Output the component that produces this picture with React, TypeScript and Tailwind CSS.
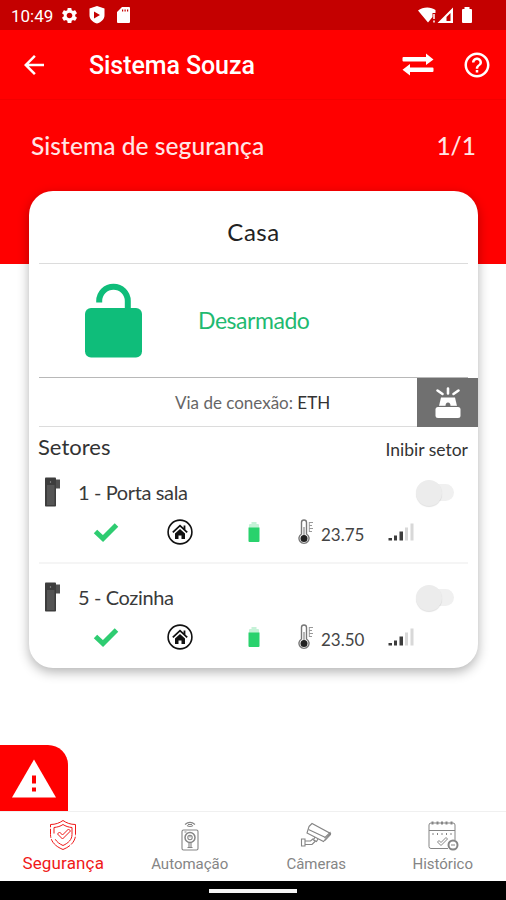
import type { ReactNode } from 'react';
import { MdArrowBack, MdHelpOutline, MdSettings } from 'react-icons/md';

type Sector = {
  id: number;
  name: string;
  temperature: string;
};

const sectors: Sector[] = [
  { id: 1, name: 'Porta sala', temperature: '23.75' },
  { id: 5, name: 'Cozinha', temperature: '23.50' },
];

function StatusBar() {
  return (
    <div className="flex h-[30px] shrink-0 items-center bg-[#c40000] pl-[11px] text-white">
      <span className="w-[49px] pt-[2px] font-['Roboto'] text-[17px] leading-[28px] whitespace-nowrap">10:49</span>
      <MdSettings className="size-[19px]" />
      <svg className="ml-[10px] h-[18px] w-[16px]" viewBox="0 0 16 18" fill="currentColor">
        <path fillRule="evenodd" d="M8 0l7.5 2.6v6.6c0 3.8-3 6.8-7.5 8.4C3.500 16 .5 13 .5 9.200V2.600zM5 5.500v7l6-3.500z" />
      </svg>
      <svg className="ml-[12px] h-[16px] w-[13px]" viewBox="0 0 13 16" fill="currentColor">
        <path fillRule="evenodd" d="M5 0h7a1 1 0 0 1 1 1v14a1 1 0 0 1-1 1H1a1 1 0 0 1-1-1V5zM5 2.500v2h1.200v-2zM7.500 2.500v2h1.200v-2zM10 2.500v2h1.200v-2z" />
      </svg>
      <svg className="ml-auto h-[18px] w-[36px]" viewBox="0 0 36 18" fill="currentColor">
        <path d="M0 4.500C5 .5 13 .5 17.500 4v3h-3v4L10 16.500z" />
        <path d="M15 8h2v5h-2zM15 14.500h2v2h-2z" opacity=".75" />
        <path fillRule="evenodd" d="M19.500 17L35 1.500V17zM28.500 11v4h4V7z" />
      </svg>
      <svg className="mr-[33px] ml-[7px] h-[18px] w-[12px]" viewBox="0 0 12 18" fill="currentColor">
        <path d="M3.500 1h5v2H10a1 1 0 0 1 1 1v12a1 1 0 0 1-1 1H2a1 1 0 0 1-1-1V4a1 1 0 0 1 1-1h1.500z" />
      </svg>
    </div>
  );
}

function AppBar() {
  return (
    <div className="flex h-[70px] shrink-0 items-center border-b border-[#f20000] bg-[#ff0000] pr-[14px] pl-[19px] text-white">
      <MdArrowBack className="size-[30px]" />
      <h1 className="ml-[40px] pt-[3px] font-['Roboto'] text-[25px] font-medium tracking-[-0.08px] whitespace-nowrap">Sistema Souza</h1>
      <svg className="ml-auto h-[23px] w-[32px]" viewBox="0 0 32 23" fill="currentColor">
        <path d="M1.500 4H24V.5L31.500 6.500 24 12V8.500H1.500a1 1 0 0 1-1-1V5a1 1 0 0 1 1-1zM30.500 14.500H8V11L.5 16.800 8 22.500V19h22.500a1 1 0 0 0 1-1v-2.500a1 1 0 0 0-1-1z" />
      </svg>
      <MdHelpOutline className="ml-[28px] size-[30px]" />
    </div>
  );
}

function LockOpenIcon() {
  return (
    <svg className="h-[76px] w-[58px]" viewBox="0 0 58 76">
      <path d="M14.200 19.500V18A14.300 14.300 0 0 1 42.800 18V30" fill="none" stroke="#0fbd7a" strokeWidth="6" />
      <rect x="0" y="25" width="57" height="49.500" rx="6" fill="#0fbd7a" />
    </svg>
  );
}

function SirenIcon() {
  return (
    <svg className="h-[32px] w-[26px]" viewBox="0 0 26 32">
      <path d="M13 1.500v5M2.500 3.500l5 3.500M23.500 3.500l-5 3.500" stroke="#fff" strokeWidth="2.600" strokeLinecap="round" />
      <path d="M6 10.500h14l2 8.500H4z" fill="#fff" />
      <path d="M10.500 19a2.500 3.500 0 0 1 5 0z" fill="#707070" />
      <path d="M3 19.300h20" stroke="#707070" strokeWidth="1" />
      <rect x="0.500" y="20" width="25" height="11" rx="2.500" fill="#fff" />
    </svg>
  );
}

function SensorIcon() {
  return (
    <svg className="h-[30px] w-[16px]" viewBox="0 0 16 30">
      <rect x="0" y="0.500" width="11" height="29" rx="0.800" fill="#3d3d3d" />
      <rect x="2" y="8" width="7.500" height="20" fill="#555" />
      <path d="M11 2.500h4v9h-4z" fill="#505050" />
      <circle cx="5.500" cy="5" r="0.700" fill="#999" />
    </svg>
  );
}

function CheckIcon() {
  return (
    <svg className="h-[20px] w-[26px]" viewBox="0 0 26 20">
      <path d="M2.500 9.500l7.500 7L23.500 3" fill="none" stroke="#2ecc71" strokeWidth="5" />
    </svg>
  );
}

function HomeIcon() {
  return (
    <svg className="size-[26px]" viewBox="0 0 26 26">
      <circle cx="13" cy="13" r="11.900" fill="none" stroke="#111" strokeWidth="1.600" />
      <path d="M5.800 13.300L13 6.700l7.200 6.600M17.500 6.500v4" fill="none" stroke="#111" strokeWidth="1.800" />
      <path d="M8 14.400l5-4.400 5 4.400V20h-3.500v-3.500h-3V20H8z" fill="#111" />
    </svg>
  );
}

function BatteryIcon() {
  return (
    <svg className="h-[22px] w-[12px]" viewBox="0 0 12 22">
      <path d="M3.500 1h5v2H10a1 1 0 0 1 1 1v4H1V4a1 1 0 0 1 1-1h1.500z" fill="#c5f2d7" />
      <path d="M.5 6.500h11V20a1 1 0 0 1-1 1h-9a1 1 0 0 1-1-1z" fill="#29d26d" />
    </svg>
  );
}

function ThermometerIcon() {
  return (
    <svg className="h-[28px] w-[16px]" viewBox="0 0 16 28">
      <path d="M3.500 16V4.500a2.500 2.500 0 0 1 5 0V16a5 5 0 1 1-5 0z" fill="#fff" stroke="#777" strokeWidth="1.400" />
      <path d="M6 9v9" stroke="#888" strokeWidth="1.200" />
      <circle cx="6" cy="20.500" r="3.500" fill="#222" />
      <path d="M11 4.500h4M11 7.500h3M11 10.500h4M11 13.500h3M11.300 4v10" stroke="#999" strokeWidth="1" />
    </svg>
  );
}

function SignalIcon() {
  return (
    <svg className="h-[18px] w-[26px]" viewBox="0 0 26 18">
      <path d="M.5 15H4v2.500H.5zM6 12.500h3v5H6zM11.500 8.500h3.500v9h-3.500z" fill="#3c3c3c" />
      <path d="M17 4.500h3v13h-3zM22.500 .5h3v17h-3z" fill="#d8d8d8" />
    </svg>
  );
}

function Toggle() {
  return (
    <div className="flex h-[28px] w-[40px] items-center">
      <div className="relative size-[26px] rounded-full bg-[#ececec] shadow-[0_1px_1px_rgba(0,0,0,0.12)]" />
      <div className="-ml-[5px] h-[17px] w-[17px] rounded-r-full bg-[#f0f0f0]" />
    </div>
  );
}

function SectorRow({ sector }: { sector: Sector }) {
  return (
    <div className="mx-[10px] h-[105px] border-b-2 border-[#f5f5f5] pt-[13px] last:border-b-0">
      <div className="flex h-[40px] items-center pr-[12px] pl-[6px]">
        <SensorIcon />
        <span className="ml-[17px] text-[20px] tracking-[-0.38px] whitespace-nowrap text-[#3a3a3a]">
          {sector.id} - {sector.name}
        </span>
        <div className="ml-auto pt-px">
          <Toggle />
        </div>
      </div>
      <div className="flex h-[40px] items-center pl-[54px]">
        <CheckIcon />
        <div className="ml-[48px]">
          <HomeIcon />
        </div>
        <div className="ml-[55px]">
          <BatteryIcon />
        </div>
        <div className="ml-[38px]">
          <ThermometerIcon />
        </div>
        <span className="ml-[7px] w-[44px] pt-[6px] text-[17px] whitespace-nowrap text-[#444]">{sector.temperature}</span>
        <div className="ml-[23px]">
          <SignalIcon />
        </div>
      </div>
    </div>
  );
}

function SystemCard() {
  return (
    <div className="relative -mt-[73px] mr-[28px] ml-[29px] h-[477px] rounded-[24px] bg-white shadow-[0_4px_12px_rgba(0,0,0,0.3)]">
      <div className="mx-[10px] flex h-[73px] items-center justify-center border-b border-[#dcdcdc] pt-[10px] text-[24px] tracking-[0.5px] text-[#222]">
        Casa
      </div>
      <div className="mx-[10px] flex h-[114px] items-center border-b border-[#b8b8b8] pl-[46px]">
        <LockOpenIcon />
        <span className="ml-[55px] text-[23px] tracking-[-0.45px] whitespace-nowrap text-[#1fba71]">Desarmado</span>
      </div>
      <div className="flex h-[49px]">
        <div className="ml-[10px] flex w-[378px] items-center border-b border-[#dcdcdc] pt-px pl-[136px] text-[17px] whitespace-nowrap text-[#666]">
          Via de conexão:&nbsp;<span className="text-[#333]">ETH</span>
        </div>
        <div className="flex w-[61px] items-center justify-center bg-[#707070]">
          <SirenIcon />
        </div>
      </div>
      <div className="mx-[10px] flex h-[32px] items-end justify-between whitespace-nowrap text-[#333]">
        <span className="-ml-px text-[22px] leading-[24px]">Setores</span>
        <span className="text-[17.500px] leading-[18px]">Inibir setor</span>
      </div>
      {sectors.map((sector) => (
        <SectorRow key={sector.id} sector={sector} />
      ))}
    </div>
  );
}

function ShieldIcon() {
  return (
    <svg className="size-[32px]" viewBox="0 0 32 32" fill="none" stroke="currentColor" strokeWidth="1">
      <path d="M16 1.500c3.500 2.500 7.500 4 12.500 4v10c0 7-5 12-12.500 15C8.500 27.500 3.500 22.500 3.500 15.500v-10c5 0 9-1.500 12.500-4z" strokeDasharray="24 1.500 9 1.500" />
      <path d="M7 14.500V8.500c3.500-.3 6.500-1.300 9-3 2.500 1.700 5.500 2.700 9 3v7c0 5-3.500 8.500-9 11-3.500-1.600-6.200-3.600-7.700-6.200" />
      <path d="M10.500 15l2-2 3 3 6-6 2 2-8 8z" />
    </svg>
  );
}

function AutomationIcon() {
  return (
    <svg className="size-[32px]" viewBox="0 0 32 32" fill="none" stroke="currentColor" strokeWidth="1.100">
      <path d="M11 5.500c3-2.600 7-2.600 10 0M13 6.500c2 1.400 4 1.400 6 0M14 5.500h4" />
      <rect x="8" y="11" width="16" height="20" rx="1.500" />
      <circle cx="16" cy="18.500" r="5" strokeWidth="1.500" />
      <circle cx="16" cy="18.500" r="2.200" />
      <path d="M10.500 13h2M16 16V18.500M15 23.500v5M17 23.500v5M13.500 28.500h5" />
    </svg>
  );
}

function CameraIcon() {
  return (
    <svg className="size-[32px]" viewBox="0 0 32 32" fill="none" stroke="currentColor" strokeWidth="1.100">
      <path d="M9 7.500l3-3 18.500 10-2.500 2.500-4.500 5.500L7 14z" />
      <path d="M8.500 10.500l17 8M24.500 19l5.500-5.500.5 2-5.500 6M15 18l-1.500 3 3 1.500L18 20" />
      <path d="M1.500 20H5v7H1.500zM5 22h5.500l3-2.500M5 25.500h7l3.500-3.500" />
    </svg>
  );
}

function HistoryIcon() {
  return (
    <svg className="size-[32px]" viewBox="0 0 32 32" fill="none" stroke="currentColor" strokeWidth="1">
      <path d="M21 29.500H4a2 2 0 0 1-2-2V6a2 2 0 0 1 2-2h22a2 2 0 0 1 2 2V21M2 11.500h26" />
      <path d="M5.500 2.500v3M10.500 2.500v3M15 2.500v3M19.500 2.500v3M24.500 2.500v3" strokeWidth="2" />
      <path d="M6 14v2M10.500 14v2M15 14v2M19.500 14v2M24 14v2" />
      <path d="M10.500 23l1.500-1.500 2 2 5-5 1.500 1.500-6.500 6.500z" />
      <circle cx="26" cy="26" r="4.500" strokeWidth="2" />
      <path d="M24 26h4" />
    </svg>
  );
}

function NavItem({ label, icon, active = false }: { label: string; icon: ReactNode; active?: boolean }) {
  return (
    <div className={`flex flex-1 flex-col items-center pt-[7px] ${active ? 'text-[#f01818]' : 'text-[#858585]'}`}>
      {icon}
      <span className={`mt-[2px] font-['Roboto'] leading-[20px] whitespace-nowrap ${active ? 'text-[17px] tracking-[0.15px]' : 'pt-px text-[15px]'}`}>{label}</span>
    </div>
  );
}

export default function App() {
  return (
    <div className="flex h-[900px] w-[506px] flex-col overflow-hidden bg-white font-['Lato',sans-serif]">
      <StatusBar />
      <AppBar />
      <div className="flex h-[164px] shrink-0 items-start justify-between bg-[#ff0000] pt-[28px] pr-[30px] pl-[31px] text-[24.500px] font-medium whitespace-nowrap text-[#ffe5e5]">
        <h2 className="tracking-[0.06px]">Sistema de segurança</h2>
        <span>1/1</span>
      </div>
      <SystemCard />
      <div className="mt-auto flex h-[66px] w-[68px] items-center justify-center rounded-tr-[20px] bg-[#ff0000]">
        <svg className="h-[39px] w-[44px]" viewBox="0 0 44 39">
          <path d="M22 .5L44 38.500H0z" fill="#fff" />
          <path d="M20 16.500h4v8h-4zM20 28.500h4v4h-4z" fill="#ff0000" />
        </svg>
      </div>
      <div className="flex h-[70px] shrink-0 border-t border-[#f0f0f0] bg-white">
        <NavItem label="Segurança" icon={<ShieldIcon />} active />
        <NavItem label="Automação" icon={<AutomationIcon />} />
        <NavItem label="Câmeras" icon={<CameraIcon />} />
        <NavItem label="Histórico" icon={<HistoryIcon />} />
      </div>
      <div className="flex h-[19px] shrink-0 justify-center bg-black pt-[8px]">
        <div className="h-[4px] w-[88px] bg-[#f5f5f5]" />
      </div>
    </div>
  );
}
